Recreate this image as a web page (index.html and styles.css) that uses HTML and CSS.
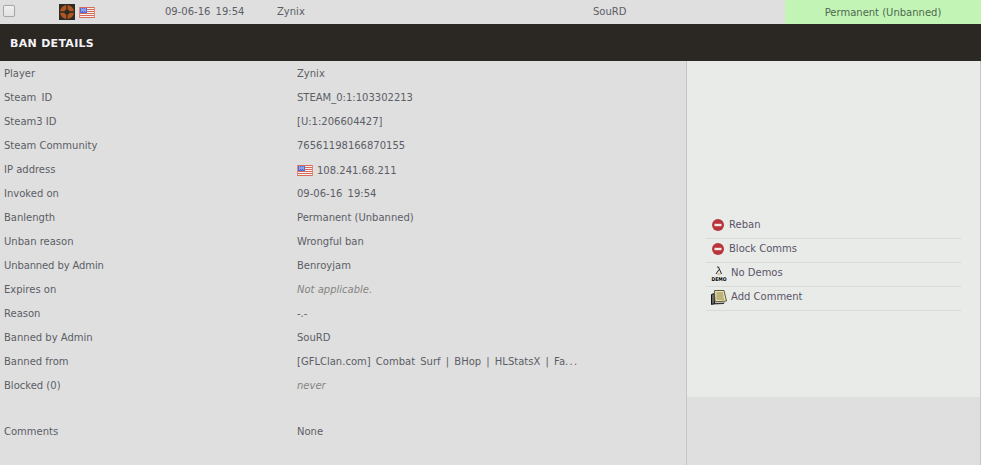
FILE: index.html
```html
<!DOCTYPE html>
<html lang="en">
<head>
<meta charset="utf-8">
<title>Ban details</title>
<link rel="stylesheet" href="styles.css">
</head>
<body>
<svg class="defs" width="0" height="0" aria-hidden="true">
  <defs>
    <symbol id="flag-us" viewBox="0 0 16 11">
      <rect width="16" height="11" fill="#f2f0f2"/>
      <path d="M0 .5h16M0 2.500h16M0 4.500h16M0 6.500h16M0 8.500h16M0 10.500h16" stroke="#d96a58" stroke-width="1"/>
      <path d="M.5 0v11M15.500 0v11" stroke="#d98a78" stroke-width="1"/>
      <rect x="1" y="1" width="7" height="5" fill="#4f6bd8"/>
      <path d="M2 2h1M4 2h1M6 2h1M3 3h1M5 3h1M2 4h1M4 4h1M6 4h1" stroke="#e8ecfb" stroke-width=".8"/>
    </symbol>
    <symbol id="stop" viewBox="0 0 12 12">
      <circle cx="6" cy="6" r="6" fill="#b9343a"/>
      <rect x="2.500" y="4.800" width="7" height="2.400" fill="#f3e9e9"/>
    </symbol>
  </defs>
</svg>

<div class="summary">
  <div class="s-check"><span class="checkbox"></span></div>
  <div class="s-icons">
    <svg class="game" viewBox="0 0 16 16" width="16" height="16">
      <rect width="16" height="16" fill="#2e2a26"/>
      <circle cx="8" cy="8" r="7" fill="#b0561e"/>
      <circle cx="8" cy="8" r="2.600" fill="#2e2a26"/>
      <path d="M8 1v14M1 8h14" stroke="#2e2a26" stroke-width="1.300"/>
    </svg>
    <svg class="flag" width="16" height="11"><use href="#flag-us"/></svg>
  </div>
  <div class="s-date ws">09-06-16 19:54</div>
  <div class="s-name">Zynix</div>
  <div class="s-admin">SouRD</div>
  <div class="s-length">Permanent (Unbanned)</div>
</div>

<h1 class="title">BAN DETAILS</h1>

<div class="details">
  <div class="fields">
    <div class="row"><span class="label">Player</span><span>Zynix</span></div>
    <div class="row"><span class="label ws">Steam ID</span><span>STEAM_0:1:103302213</span></div>
    <div class="row"><span class="label">Steam3 ID</span><span>[U:1:206604427]</span></div>
    <div class="row"><span class="label">Steam Community</span><span>76561198166870155</span></div>
    <div class="row"><span class="label">IP address</span><span class="ip"><svg class="flag" width="16" height="11"><use href="#flag-us"/></svg>108.241.68.211</span></div>
    <div class="row"><span class="label">Invoked on</span><span class="ws">09-06-16 19:54</span></div>
    <div class="row"><span class="label">Banlength</span><span>Permanent (Unbanned)</span></div>
    <div class="row"><span class="label">Unban reason</span><span>Wrongful ban</span></div>
    <div class="row"><span class="label tight">Unbanned by Admin</span><span>Benroyjam</span></div>
    <div class="row"><span class="label">Expires on</span><span class="muted">Not applicable.</span></div>
    <div class="row"><span class="label">Reason</span><span>-.-</span></div>
    <div class="row"><span class="label">Banned by Admin</span><span>SouRD</span></div>
    <div class="row"><span class="label">Banned from</span><span class="servers">[GFLClan.com] Combat Surf | BHop | HLStatsX | Fa<span class="ellipsis">...</span></span></div>
    <div class="row"><span class="label">Blocked (0)</span><span class="muted">never</span></div>
    <div class="row row-comments"><span class="label">Comments</span><span>None</span></div>
  </div>
  <aside class="side">
    <div class="actions">
      <a class="action"><svg class="stop" width="12" height="12"><use href="#stop"/></svg>Reban</a>
      <a class="action"><svg class="stop" width="12" height="12"><use href="#stop"/></svg>Block Comms</a>
      <a class="action">
        <svg class="demo" viewBox="0 0 16 17" width="16" height="17">
          <path d="M6 1h1.500l3 7M8 3.500l-3 4.500" fill="none" stroke="#222" stroke-width="1"/>
          <path d="M6.500 9l1.500-1.500 1.500 1.500" fill="none" stroke="#c9a04a" stroke-width="1"/>
          <text class="demo-text" x="8" y="14.500" text-anchor="middle" textLength="15" lengthAdjust="spacingAndGlyphs">DEMO</text>
        </svg>No Demos</a>
      <a class="action">
        <svg class="note" viewBox="0 0 16 16" width="16" height="16">
          <path d="M.5 5.500l3-1v10l-3 1z" fill="#666" stroke="#111"/>
          <path d="M1.500 15.500l11-.5 1.500-1.500-10 .5z" fill="#333"/>
          <path d="M3.500 1.500h9.500l2.500 10.500-11.500.8z" fill="#e9e2ad" stroke="#5e5a3a"/>
          <path d="M5.500 4h6.500M5.500 6h7M5.500 8h7M5.500 10h7.500" stroke="#8f8450" stroke-width="1"/>
        </svg>Add Comment</a>
    </div>
  </aside>
</div>
</body>
</html>
```
FILE: styles.css
```css
* {
  box-sizing: border-box;
}

html,
body {
  margin: 0;
  padding: 0;
}

body {
  width: 981px;
  height: 465px;
  overflow: hidden;
  background: #dfdfdf;
  color: #5b5e66;
  font-family: "DejaVu Sans", Verdana, sans-serif;
  font-size: 10px;
  line-height: 26px;
}

.defs {
  position: absolute;
}

.ws {
  word-spacing: 2px;
}

.tight {
  letter-spacing: -0.12px;
}

.servers {
  word-spacing: 2px;
}

.ellipsis {
  letter-spacing: 1.300px;
}

.summary {
  display: flex;
  height: 24px;
  background: #dfdfdf;
  align-items: center;
}

.s-check {
  width: 59px;
  padding: 0 0 2px 3px;
  display: flex;
}

.checkbox {
  width: 12px;
  height: 12px;
  border: 1px solid #a8a8a8;
  border-radius: 2px;
  background: linear-gradient(#f0f0f0, #e2e2e2);
  box-shadow: 0 0 1px #bbb;
}

.s-icons {
  width: 106px;
  display: flex;
  align-items: center;
  gap: 4px;
}

.s-icons .flag {
  margin-top: 1px;
}

.s-date {
  width: 112px;
}

.s-name {
  width: 316px;
}

.s-admin {
  width: 192px;
}

.s-length {
  flex: 1;
  height: 24px;
  background: #c2f4b6;
  text-align: center;
  color: #4d6a4d;
}

.flag,
.game {
  display: block;
  flex: none;
}

.title {
  margin: 0;
  height: 37px;
  padding-left: 10px;
  background: #2b2723;
  color: #f4f4f8;
  font-size: 11px;
  font-weight: 700;
  letter-spacing: 0.3px;
  line-height: 40px;
}

.details {
  display: flex;
  height: 404px;
}

.fields {
  width: 686px;
  padding-left: 4px;
}

.row {
  display: flex;
  height: 24px;
}

.row-comments {
  margin-top: 22px;
}

.label {
  width: 293px;
  flex: none;
}

.ip {
  display: flex;
  align-items: center;
  gap: 4px;
  padding-top: 3px;
}

.muted {
  color: #84867f;
  font-style: italic;
}

.side {
  width: 295px;
  height: 336px;
  border-left: 1px solid #c4c4c4;
  border-right: 1px solid #c4c4c4;
  background: #e9ebe9;
  padding: 154px 19px 0;
  position: relative;
}

.side::after {
  content: "";
  position: absolute;
  left: -1px;
  right: -1px;
  top: 336px;
  height: 68px;
  border-left: 1px solid #c4c4c4;
  border-right: 1px solid #c4c4c4;
}

.action {
  display: flex;
  align-items: center;
  height: 24px;
  padding-bottom: 3px;
  border-bottom: 1px solid #d9dbd9;
  color: #5a5468;
  line-height: 20px;
}

.stop {
  margin: 0 5px 0 6px;
  flex: none;
}

.demo {
  margin: 3px 4px 0 5px;
  flex: none;
}

.demo-text {
  fill: #000;
  font-family: "DejaVu Sans", sans-serif;
  font-size: 5px;
  font-weight: 700;
}

.note {
  margin: 0 4px 0 5px;
  flex: none;
}
```
